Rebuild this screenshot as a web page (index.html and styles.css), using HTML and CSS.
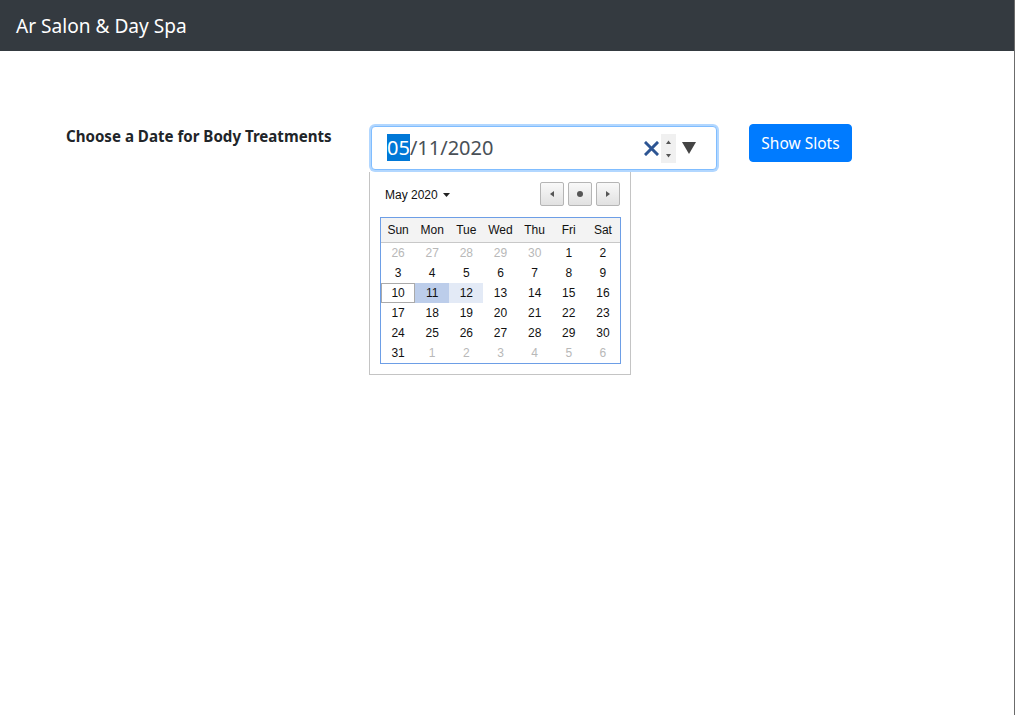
FILE: index.html
```html
<!DOCTYPE html>
<html>
<head>
<meta charset="utf-8">
<link rel="stylesheet" href="styles.css">
</head>
<body>
<div class="page">
  <header class="navbar"><span class="brand">Ar Salon &amp; Day Spa</span></header>
  <main class="main">
    <label class="label">Choose a Date for Body Treatments</label>
    <div class="picker">
      <div class="input">
        <span class="value"><span class="sel">05</span>/11/2020</span>
        <span class="controls">
          <svg class="clear" width="15" height="15" viewBox="0 0 15 15"><path d="M2 2 L13 13 M13 2 L2 13" stroke="#2d5593" stroke-width="3" stroke-linecap="square"/></svg>
          <span class="spin">
            <svg width="15" height="29" viewBox="0 0 15 29"><path d="M5 10 L7.5 6.5 L10 10 Z" fill="#555"/><path d="M5 20 L7.5 23.5 L10 20 Z" fill="#555"/></svg>
          </span>
          <svg class="drop" width="14" height="12" viewBox="0 0 14 12"><path d="M0 0 H14 L7 12 Z" fill="#444"/></svg>
        </span>
      </div>
      <div class="popup">
        <div class="cal-head">
          <span class="month">May 2020 <svg width="7" height="4" viewBox="0 0 7 4"><path d="M0 0 H7 L3.5 4 Z" fill="#222"/></svg></span>
          <span class="navs">
            <span class="nbtn"><svg width="4" height="6" viewBox="0 0 4 6"><path d="M4 0 V6 L0 3 Z" fill="#555"/></svg></span>
            <span class="nbtn"><svg width="6" height="6" viewBox="0 0 6 6"><circle cx="3" cy="3" r="3" fill="#555"/></svg></span>
            <span class="nbtn"><svg width="4" height="6" viewBox="0 0 4 6"><path d="M0 0 V6 L4 3 Z" fill="#555"/></svg></span>
          </span>
        </div>
        <div class="grid">
          <div class="dow"><span>Sun</span><span>Mon</span><span>Tue</span><span>Wed</span><span>Thu</span><span>Fri</span><span>Sat</span></div>
          <div class="days">
            <span class="o">26</span><span class="o">27</span><span class="o">28</span><span class="o">29</span><span class="o">30</span><span>1</span><span>2</span>
            <span>3</span><span>4</span><span>5</span><span>6</span><span>7</span><span>8</span><span>9</span>
            <span class="today">10</span><span class="cur">11</span><span class="hov">12</span><span>13</span><span>14</span><span>15</span><span>16</span>
            <span>17</span><span>18</span><span>19</span><span>20</span><span>21</span><span>22</span><span>23</span>
            <span>24</span><span>25</span><span>26</span><span>27</span><span>28</span><span>29</span><span>30</span>
            <span>31</span><span class="o">1</span><span class="o">2</span><span class="o">3</span><span class="o">4</span><span class="o">5</span><span class="o">6</span>
          </div>
        </div>
      </div>
    </div>
    <button class="btn">Show Slots</button>
  </main>
</div>
</body>
</html>
```
FILE: styles.css
```css
html, body { margin: 0; padding: 0; height: 100%; }
body { font-family: "Noto Sans", "Open Sans", sans-serif; color: #212529; background: #fff; }
.page { height: 715px; border-right: 1px solid #6b6b6b; box-sizing: border-box; }
.navbar { height: 51px; background: #343a40; display: flex; align-items: center; padding-left: 16px; }
.brand { color: #fff; font-size: 19.1px; }
.main { display: flex; align-items: flex-start; padding: 73px 0 0 66px; }
.label { width: 303px; font-weight: 700; font-size: 15.1px; line-height: 24px; color: #212529; }
.picker { position: relative; width: 350px; }
.input { margin: 2px; height: 44px; box-sizing: border-box; border: 1px solid #80bdff; border-radius: 4px; box-shadow: 0 0 0 2px rgba(0,123,255,.3); display: flex; align-items: center; padding-left: 15px; background: #fff; }
.value { font-size: 20px; color: #495057; flex: 1; line-height: 26px; }
.sel { background: #0078d7; color: #fff; }
.controls { display: flex; align-items: center; margin-right: 20px; }
.clear { display: block; margin-right: 2px; }
.spin { display: block; background: #f0f0f0; width: 15px; height: 29px; margin-top: 1px; }
.spin svg { display: block; }
.drop { display: block; margin-left: 6px; }
.popup { position: absolute; left: 0; top: 48px; width: 262px; height: 203px; box-sizing: border-box; border: 1px solid #c4c4c4; border-top: none; background: #fff; padding: 10px 10px 0 10px; font-family: "Liberation Sans", Arial, sans-serif; font-size: 12px; color: #111; }
.cal-head { display: flex; justify-content: space-between; align-items: center; height: 24px; margin-bottom: 11px; }
.month { margin-left: 5px; display: flex; align-items: center; gap: 5px; padding-top: 2px; }
.navs { display: flex; gap: 4px; }
.nbtn { width: 24px; height: 24px; box-sizing: border-box; border: 1px solid #b5b5b5; border-radius: 2px; background: linear-gradient(#f9f9f9, #e1e1e1); display: flex; align-items: center; justify-content: center; }
.grid { width: 241px; box-sizing: border-box; border: 1px solid #6d9ee6; }
.dow { display: grid; grid-template-columns: repeat(7, 1fr); height: 24px; background: #f3f3f3; border-bottom: 1px solid #c8c8c8; }
.dow span, .days span { display: flex; align-items: center; justify-content: center; }
.days { display: grid; grid-template-columns: repeat(7, 1fr); grid-auto-rows: 20px; }
.days .o { color: #b8b8b8; }
.days .today { box-shadow: inset 0 0 0 1px #aaa; }
.days .cur { background: #bccdea; }
.days .hov { background: #e3eaf6; }
.btn { margin-left: 30px; width: 103px; height: 38px; background: #007bff; color: #fff; border: 1px solid #007bff; border-radius: 4px; font-family: "Noto Sans", sans-serif; font-size: 15.5px; padding: 0; }
```
